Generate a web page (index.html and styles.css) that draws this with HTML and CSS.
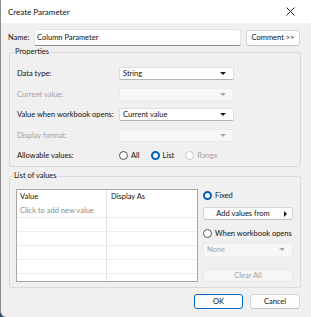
FILE: index.html
```html
<!DOCTYPE html>
<html lang="en">
<head>
  <meta charset="UTF-8" />
  <title>Create Parameter</title>
  <link rel="stylesheet" href="styles.css">
</head>
<body>
  <div class="dialog">
    <div class="titlebar">
      <span>Create Parameter</span>
      <svg class="close" width="9" height="9" viewBox="0 0 9 9">
        <path d="M0.5 0.5 L8.5 8.5 M8.5 0.5 L0.5 8.5" stroke="#222" stroke-width="1" fill="none" />
      </svg>
    </div>

    <div class="content">
      <div class="name-row">
        <span class="name-label">Name:</span>
        <div class="field">Column Parameter</div>
        <div class="btn comment">Comment &gt;&gt;</div>
      </div>

      <fieldset class="group props">
        <legend>Properties</legend>
        <div class="grid">
          <span>Data type:</span>
          <div class="select">String<i class="arrow"></i></div>

          <span class="muted">Current value:</span>
          <div class="select disabled"><i class="arrow"></i></div>

          <span>Value when workbook opens:</span>
          <div class="select">Current value<i class="arrow"></i></div>

          <span class="muted">Display format:</span>
          <div class="select disabled"><i class="arrow"></i></div>

          <span>Allowable values:</span>
          <div class="radios">
            <label class="radio"><i class="dot"></i>All</label>
            <label class="radio"><i class="dot on"></i>List</label>
            <label class="radio muted"><i class="dot off"></i>Range</label>
          </div>
        </div>
      </fieldset>

      <fieldset class="group values">
        <legend>List of values</legend>
        <div class="values-body">
          <div class="list">
            <div class="row head"><span>Value</span><span>Display As</span></div>
            <div class="row"><span class="hint">Click to add new value</span><span></span></div>
            <div class="row"><span></span><span></span></div>
            <div class="row"><span></span><span></span></div>
            <div class="row"><span></span><span></span></div>
            <div class="row"><span></span><span></span></div>
            <div class="row"><span></span><span></span></div>
          </div>

          <div class="side">
            <label class="radio"><i class="dot on"></i>Fixed</label>
            <div class="btn add">Add values from<i class="tri"></i></div>
            <label class="radio when"><i class="dot"></i>When workbook opens</label>
            <div class="select disabled none">None<i class="arrow"></i></div>
            <div class="btn clear">Clear All</div>
          </div>
        </div>
      </fieldset>

      <div class="footer">
        <div class="btn ok">OK</div>
        <div class="btn cancel">Cancel</div>
      </div>
    </div>
  </div>
</body>
</html>
```

FILE: styles.css
```css
* {
  box-sizing: border-box;
}

body {
  margin: 0;
  background: #2c4d74;
  font-family: 'Lato', 'Noto Sans', sans-serif;
  font-size: 7.5px;
  color: #111;
  white-space: nowrap;
}

.dialog {
  width: 311px;
  height: 317px;
  background: #f0f0f0;
  border-left: 1px solid #8c8c8c;
  border-bottom-left-radius: 6px;
  overflow: hidden;
}

.titlebar {
  height: 23px;
  background: #fff;
  display: flex;
  align-items: center;
  justify-content: space-between;
  padding: 0 16px 0 7px;
  font-size: 8px;
}

.content {
  padding: 6px 0 0 7px;
}

.name-row {
  display: flex;
  align-items: center;
  height: 17px;
}

.name-label {
  width: 26px;
}

.field {
  width: 207px;
  height: 17px;
  background: #fff;
  border: 1px solid #e3e3e3;
  border-bottom-color: #8a8a8a;
  border-radius: 2px;
  padding: 0 2px;
  line-height: 15px;
}

.btn {
  height: 14px;
  background: #fdfdfd;
  border: 1px solid #d6d6d6;
  border-bottom-color: #c2c2c2;
  border-radius: 3px;
  display: flex;
  align-items: center;
  justify-content: center;
}

.comment {
  width: 54px;
  height: 16px;
  margin-left: 5px;
}

.group {
  margin: 1px 0 0 1px;
  width: 292px;
  border: 1px solid #d9d9d9;
  border-radius: 3px;
  padding: 10px 7px 4px 7px;
}

.group legend {
  padding: 0 1px;
  margin-left: -3px;
  line-height: 10px;
}

.grid {
  display: grid;
  grid-template-columns: 102px 115px;
  grid-auto-rows: 13px;
  row-gap: 7.5px;
  align-items: center;
}

.muted {
  color: #a3a3a3;
}

.select {
  position: relative;
  height: 13px;
  background: #fff;
  border: 1px solid #dedede;
  border-bottom-color: #b5b5b5;
  border-radius: 2px;
  padding: 0 3px;
  line-height: 11px;
}

.select.disabled {
  background: #f7f7f7;
  border-color: #ebebeb;
  color: #a3a3a3;
}

.arrow {
  position: absolute;
  right: 7px;
  top: 4px;
  border-left: 3px solid transparent;
  border-right: 3px solid transparent;
  border-top: 3px solid #1a1a1a;
}

.disabled .arrow {
  border-top-color: #a8a8a8;
}

.radios {
  display: flex;
  gap: 11px;
}

.radio {
  display: flex;
  align-items: center;
  gap: 3px;
}

.dot {
  flex-shrink: 0;
  width: 9px;
  height: 9px;
  border-radius: 50%;
  border: 1px solid #555;
  background: #fff;
}

.dot.on {
  border: 2.5px solid #005fb8;
}

.dot.off {
  border-color: #c8c8c8;
}

.values {
  margin-top: 4px;
  padding: 8px 7px 5px 6px;
}

.values-body {
  display: flex;
  gap: 5px;
}

.list {
  width: 182px;
  height: 93px;
  background: #fff;
  border: 1px solid #a6a6a6;
  overflow: hidden;
}

.row {
  display: grid;
  grid-template-columns: 89px 1fr;
  height: 14px;
  border-bottom: 1px solid #ededed;
}

.row.head {
  border-bottom: none;
}

.row span {
  padding-left: 3px;
  line-height: 14px;
}

.row span + span {
  border-left: 1px solid #e3e3e3;
  padding-left: 4px;
}

.hint {
  color: #8a8a8a;
}

.side {
  width: 90px;
  display: flex;
  flex-direction: column;
}

.side > .radio {
  height: 12px;
}

.add {
  margin-top: 6px;
  height: 13px;
  position: relative;
  padding-right: 10px;
}

.tri {
  position: absolute;
  right: 5px;
  top: 3px;
  border-top: 3px solid transparent;
  border-bottom: 3px solid transparent;
  border-left: 3px solid #1a1a1a;
}

.when {
  margin-top: 7px;
}

.none {
  margin-top: 4px;
  height: 14px;
  line-height: 12px;
}

.clear {
  margin-top: 12px;
  height: 13px;
  background: #f6f6f6;
  border-color: #e6e6e6;
  color: #a3a3a3;
}

.footer {
  display: flex;
  justify-content: flex-end;
  gap: 7px;
  margin-top: 6px;
  padding-right: 11px;
}

.ok {
  width: 49px;
  height: 15px;
  border-color: #0067c0;
}

.cancel {
  width: 50px;
  height: 15px;
}
```
